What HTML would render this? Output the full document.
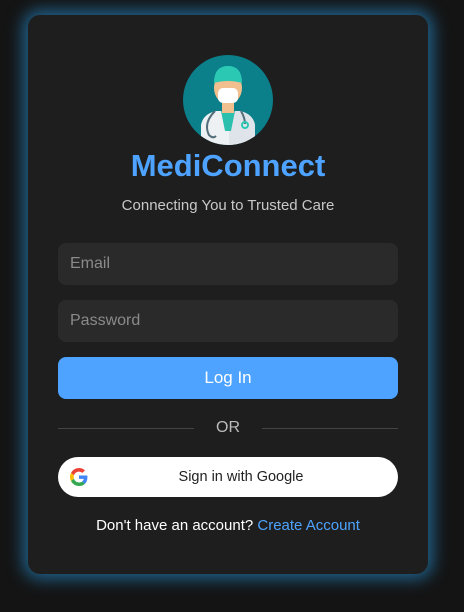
<!DOCTYPE html>
<html><head><style>
*{box-sizing:border-box;margin:0;padding:0}
body{width:464px;height:612px;background:#141414;font-family:"Liberation Sans",sans-serif;position:relative;overflow:hidden}
.card{position:absolute;left:28px;top:15px;width:400px;height:559px;background:#1e1e1e;border-radius:12px;box-shadow:0 0 16px 5px rgba(40,150,220,0.6)}
.av{position:absolute;left:183px;top:55px;width:90px;height:90px;border-radius:50%;background:#0b7f8a;overflow:hidden}
h1{position:absolute;left:0;width:456px;top:148px;text-align:center;color:#4da3ff;font-size:31px;font-weight:bold}
.sub{position:absolute;left:0;width:456px;top:197px;text-align:center;color:#c8c8c8;font-size:15px}
.in{position:absolute;left:58px;width:340px;height:42px;background:#2a2a2a;border-radius:8px;color:#8a8a8a;font-size:16px;padding:12px 12px}
.btn{position:absolute;left:58px;top:357px;width:340px;height:42px;background:#4da3ff;border-radius:8px;color:#fff;font-size:17px;text-align:center;line-height:42px}
.line{position:absolute;top:428px;height:1px;background:#444}
.or{position:absolute;left:0;width:456px;top:419px;text-align:center;color:#bbb;font-size:16px}
.g{position:absolute;left:58px;top:457px;width:340px;height:40px;background:#fff;border-radius:20px;color:#222;font-size:14.5px;text-align:center;line-height:40px;padding-left:26px}
.ft{position:absolute;left:0;width:456px;top:517px;text-align:center;color:#fff;font-size:15px}
.ft span{color:#4da3ff}
</style></head><body>
<div class="card"></div>
<div class="av"><svg width="90" height="90" viewBox="0 0 90 90">
<path d="M18 90 L18 70 Q20 59 33 56 L57 56 Q70 59 72 70 L72 90Z" fill="#eef1f4"/>
<path d="M46 56 L57 56 Q70 59 72 70 L72 90 L46 90Z" fill="#dfe4ea"/>
<path d="M38 56 L52 56 L48 76 L42 76Z" fill="#2bbfae"/>
<rect x="39" y="44" width="12" height="14" fill="#f2c08e"/>
<ellipse cx="45" cy="33" rx="14" ry="16" fill="#f2c08e"/>
<path d="M31 30 Q31 11 45 11 Q59 11 59 30 L59 24 Q45 20 31 24Z" fill="#2bc8b4"/>
<path d="M31 28 Q31 11 45 11 Q59 11 59 28 Q45 24 31 28Z" fill="#2bc8b4"/>
<rect x="35" y="33" width="20" height="15" rx="5" fill="#fff"/>
<path d="M32 56 Q20 68 26 80 Q30 84 33 81 M58 56 Q62 63 62 69" stroke="#546e7a" stroke-width="2" fill="none"/>
<circle cx="62" cy="70" r="3" fill="none" stroke="#2bc8b4" stroke-width="2"/>
</svg></div>
<h1>MediConnect</h1>
<div class="sub">Connecting You to Trusted Care</div>
<div class="in" style="top:243px">Email</div>
<div class="in" style="top:300px">Password</div>
<div class="btn">Log In</div>
<div class="line" style="left:58px;width:136px"></div>
<div class="line" style="left:262px;width:136px"></div>
<div class="or">OR</div>
<div class="g"><svg style="position:absolute;left:12px;top:11px" width="18" height="18" viewBox="0 0 48 48"><path fill="#EA4335" d="M24 9.5c3.5 0 6.6 1.2 9.1 3.6l6.8-6.8C35.8 2.4 30.3 0 24 0 14.6 0 6.6 5.4 2.7 13.3l7.9 6.1C12.5 13.6 17.8 9.5 24 9.5z"/><path fill="#4285F4" d="M46.5 24.5c0-1.6-.1-3.1-.4-4.5H24v9h12.7c-.6 3-2.3 5.5-4.8 7.2l7.7 6c4.5-4.2 6.9-10.300 6.9-17.7z"/><path fill="#FBBC05" d="M10.5 28.6c-.5-1.4-.8-3-.8-4.6s.3-3.2.8-4.6l-7.9-6.1C1 16.6 0 20.2 0 24s1 7.4 2.7 10.7l7.8-6.1z"/><path fill="#34A853" d="M24 48c6.5 0 11.9-2.1 15.9-5.8l-7.7-6c-2.2 1.5-5 2.3-8.2 2.3-6.2 0-11.5-4.2-13.4-9.9l-7.9 6.1C6.6 42.6 14.6 48 24 48z"/></svg>Sign in with Google</div>
<div class="ft">Don't have an account? <span>Create Account</span></div>
</body></html>
